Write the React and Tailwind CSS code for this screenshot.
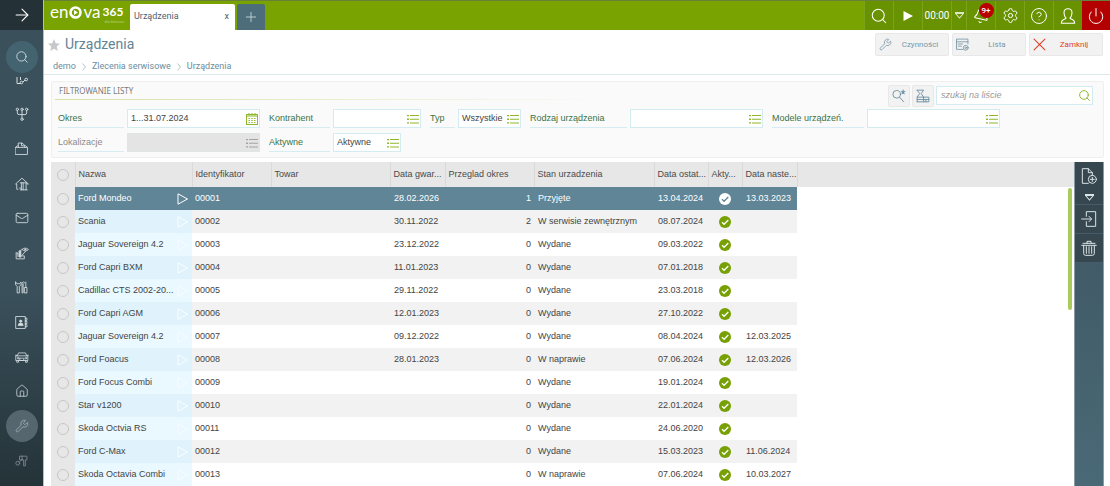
import React from 'react';
import { ArrowRight, Search, Settings, Power, Plus, Mail, House, Wrench, CircleQuestionMark, Bell } from 'lucide-react';

const rows = [
  { name: 'Ford Mondeo', id: '00001', warranty: '28.02.2026', period: 1, state: 'Przyjęte', last: '13.04.2024', next: '13.03.2023' },
  { name: 'Scania', id: '00002', warranty: '30.11.2022', period: 2, state: 'W serwisie zewnętrznym', last: '08.07.2024', next: '' },
  { name: 'Jaguar Sovereign 4.2', id: '00003', warranty: '23.12.2022', period: 0, state: 'Wydane', last: '09.03.2022', next: '' },
  { name: 'Ford Capri BXM', id: '00004', warranty: '11.01.2023', period: 0, state: 'Wydane', last: '07.01.2018', next: '' },
  { name: 'Cadillac CTS 2002-20...', id: '00005', warranty: '29.11.2022', period: 0, state: 'Wydane', last: '23.03.2018', next: '' },
  { name: 'Ford Capri AGM', id: '00006', warranty: '12.01.2023', period: 0, state: 'Wydane', last: '27.10.2022', next: '' },
  { name: 'Jaguar Sovereign 4.2', id: '00007', warranty: '09.12.2022', period: 0, state: 'Wydane', last: '08.04.2024', next: '12.03.2025' },
  { name: 'Ford Foacus', id: '00008', warranty: '28.01.2023', period: 0, state: 'W naprawie', last: '07.06.2024', next: '12.03.2026' },
  { name: 'Ford Focus Combi', id: '00009', warranty: '', period: 0, state: 'Wydane', last: '19.01.2024', next: '' },
  { name: 'Star v1200', id: '00010', warranty: '', period: 0, state: 'Wydane', last: '22.01.2024', next: '' },
  { name: 'Skoda Octvia RS', id: '00011', warranty: '', period: 0, state: 'Wydane', last: '24.06.2020', next: '' },
  { name: 'Ford C-Max', id: '00012', warranty: '', period: 0, state: 'Wydane', last: '15.03.2023', next: '11.06.2024' },
  { name: 'Skoda Octavia Combi', id: '00013', warranty: '', period: 0, state: 'W naprawie', last: '07.06.2024', next: '10.03.2027' },
];

const columns = [
  { label: 'Nazwa', width: 'w-[117px]' },
  { label: 'Identyfikator', width: 'w-[79px]' },
  { label: 'Towar', width: 'w-[119px]' },
  { label: 'Data gwar...', width: 'w-[55px]' },
  { label: 'Przeglad okres', width: 'w-[89px]' },
  { label: 'Stan urzadzenia', width: 'w-[120px]' },
  { label: 'Data ostat...', width: 'w-[54px]' },
  { label: 'Akty...', width: 'w-[34px]' },
  { label: 'Data naste...', width: 'w-[55px]' },
];

const Svg = ({ size = 12, box = 24, sw = 1.6, children, className = '' }) => (
  <svg width={size} height={size} viewBox={`0 0 ${box} ${box}`} fill="none" stroke="currentColor" strokeWidth={sw} strokeLinecap="round" strokeLinejoin="round" className={className} aria-hidden="true">
    {children}
  </svg>
);

const ListIcon = () => (
  <svg width="13" height="9" viewBox="0 0 13 9" fill="currentColor" aria-hidden="true">
    <path d="M0 0h2v1.3H0zM3 0h9v1.1H3zM0 3.6h2v1.3H0zM3 3.7h9v1.1H3zM0 7.3h2v1.3H0zM3 7.4h9v1.1H3z" />
  </svg>
);

const CalendarIcon = () => (
  <svg width="12" height="12" viewBox="0 0 12 12" fill="none" stroke="currentColor" aria-hidden="true">
    <rect x="0.5" y="1.5" width="11" height="10" />
    <path d="M0.5 3h11M3 0v2.5M6 0v2.5M9 0v2.5" />
    <path d="M2.5 5.5h7M2.5 7.5h7M2.5 9.5h7" strokeWidth="1.2" strokeDasharray="1.4 1.4" />
  </svg>
);

const DropTriangle = () => (
  <svg width="9" height="7" viewBox="0 0 9 7" fill="none" stroke="currentColor" aria-hidden="true">
    <path d="M0 1h9" strokeWidth="2" />
    <path d="M1 2 4.500 6 8 2" strokeWidth="1.1" />
  </svg>
);

const PlayOutline = ({ className }) => (
  <svg width="12" height="12" viewBox="0 0 12 12" fill="none" stroke="currentColor" className={className} aria-hidden="true">
    <path d="M1 0.8 10.5 6 1 11.2z" />
  </svg>
);

const CheckBadge = ({ selected }) => (
  <svg width="12" height="12" viewBox="0 0 12 12" className={`mx-auto ${selected ? 'text-white' : 'text-[#76a003]'}`} aria-label="tak">
    <circle cx="6" cy="6" r="6" fill="currentColor" />
    <path d="M3 6.2 5.1 8.3 9.3 4" fill="none" stroke={selected ? '#5f8597' : '#fff'} strokeWidth="1.3" />
  </svg>
);

const WrenchIcon = ({ size = 13, sw = 1.5 }) => <Wrench size={size} strokeWidth={sw} />;

const sideItems = [
  {
    label: 'Rozgałęzienia',
    icon: (
      <Svg size={14}>
        <circle cx="4" cy="4" r="2" /><circle cx="12" cy="4" r="2" /><circle cx="20" cy="4" r="2" /><circle cx="12" cy="21" r="2" />
        <path d="M4 6v4q0 3 3 3h10q3 0 3-3V6M12 6v13" />
      </Svg>
    ),
  },
  {
    label: 'Dokumenty',
    icon: <Svg size={13}><path d="M1 10h22v13H1zM1 10l3-3h2M20 7l3 3M6 10V2h7l5 4v4M12 2v5h6" /></Svg>,
  },
  {
    label: 'Bank',
    icon: <Svg size={14} sw={1.5}><path d="M5 21H3v-9H1L12 2l11 10h-2M9 10h11M9 22h12M11 10v12M14 10v12M19 10v12M8 19h2" /></Svg>,
  },
  { label: 'Poczta', icon: <Mail size={14} strokeWidth={1.5} /> },
  {
    label: 'Produkcja',
    icon: (
      <Svg size={14} sw={1.5}>
        <path d="M2 12v10h14v-5H8M2 12h3v6M12 16l6-7" />
        <path d="M7 9v10h3V8z" fill="currentColor" />
        <path d="M12 6q5-5 11 0-5 5-11 0z" />
        <circle cx="17.500" cy="6" r="1" />
      </Svg>
    ),
  },
  {
    label: 'Narzędzia',
    icon: <Svg size={13}><path d="M1 2v5l3 3v12h4V10l3-3V2L8 5H4zM13 3q3-3 5 0M15 5v17h-2V5M20 2v9M18 12h4v10h-4z" /></Svg>,
  },
  {
    label: 'Kontakty',
    icon: (
      <Svg size={13}>
        <path d="M2 1h17v22H2zM19 4h3v4h-3M19 10h3v4h-3M19 16h3v4h-3" />
        <circle cx="10.500" cy="9.500" r="2" fill="currentColor" />
        <path d="M6 17q0-4 4.500-4t4.500 4z" fill="currentColor" />
      </Svg>
    ),
  },
  {
    label: 'Flota',
    icon: <Svg size={14} sw={1.4}><path d="M4 10 6 5h12l2 5M2 10h20v8H2zM1 9h2M21 9h2M3 18v3h3v-3M18 18v3h3v-3M9 14h6v4H9z" /><circle cx="5.500" cy="14" r="1.500" /><circle cx="18.500" cy="14" r="1.500" /></Svg>,
  },
  { label: 'Dom', icon: <House size={14} strokeWidth={1.3} /> },
  { label: 'Serwis', icon: <WrenchIcon size={14} sw={1.3} />, active: true },
  {
    label: 'Klucze',
    icon: <Svg size={13} className="opacity-50"><path d="M9 4h13v7h-3v11h-3V11H9zM13 4v7M9 14l4-4" /><circle cx="5" cy="17" r="3.500" /></Svg>,
  },
];

const Sidebar = () => (
  <aside className="w-11 shrink-0 flex flex-col border-r border-[#b4c0c6] bg-gradient-to-b from-[#3a505b] from-60% to-[#243338] text-[#d5dde1]">
    <button aria-label="Rozwiń menu" className="h-[30px] shrink-0 flex items-center justify-center bg-[#243137] text-white">
      <ArrowRight size={20} strokeWidth={1.3} />
    </button>
    <button aria-label="Szukaj" className="mt-[11px] w-8 h-8 shrink-0 self-center rounded-full bg-[#446370] flex items-center justify-center">
      <Search size={14} strokeWidth={1.5} />
    </button>
    <nav className="flex-1 min-h-0 flex flex-col pb-2 overflow-hidden">
      <div className="h-6 shrink-0 flex justify-center pt-1">
        <svg width="12" height="8" viewBox="0 0 12 8" fill="none" stroke="currentColor" aria-hidden="true">
          <path d="M1 0v6.500h4M7 5l2-2M4.500 3V0" />
          <circle cx="5.500" cy="5.500" r="1.300" /><circle cx="10.200" cy="2.500" r="1.300" />
        </svg>
      </div>
      {sideItems.map((item) => (
        <a key={item.label} href="#" aria-label={item.label} className="flex-1 flex items-center justify-center">
          <span className={item.active ? 'w-8 h-8 rounded-full bg-[#55666e] flex items-center justify-center text-[#aeb9be]' : ''}>
            {item.icon}
          </span>
        </a>
      ))}
    </nav>
  </aside>
);

const TopButton = ({ label, className = 'w-[29px]', children }) => (
  <button aria-label={label} className={`h-full flex items-center justify-center border-l border-[#7ba41c] bg-[#689200] ${className}`}>
    {children}
  </button>
);

const Header = () => (
  <header className="h-[30px] shrink-0 flex bg-[#79a300] border-t border-[#68803a] text-white">
    <a href="#" className="w-[86px] shrink-0 pl-1.5 pt-[3px] flex flex-col font-['Lato',sans-serif]">
      <span className="flex items-center h-4 text-[17px] leading-4">
        <span>en</span>
        <svg width="13" height="13" viewBox="0 0 13 13" className="mx-px" aria-hidden="true">
          <circle cx="6.500" cy="6.500" r="5" fill="none" stroke="#fff" strokeWidth="2.600" />
          <path d="M5 4v5l4-2.500z" fill="#fff" />
        </svg>
        <span>va</span>
        <span className="ml-0.5 text-[12px] font-bold">365</span>
      </span>
      <span className="pr-1.5 text-right text-[4px] leading-none text-[#bcd27c]">dla biznesu</span>
    </a>
    <div className="w-[105px] mt-[3px] px-1 flex items-center justify-between rounded-t-xs bg-white text-[9px] text-[#51626c]">
      <span>Urządzenia</span>
      <button aria-label="Zamknij kartę" className="pr-0.5">x</button>
    </div>
    <button aria-label="Nowa karta" className="w-7 ml-0.5 mt-[3px] rounded-t-xs bg-[#4d6d7a] text-[#c9d6dc] flex items-center justify-center">
      <Plus size={16} strokeWidth={1.3} />
    </button>
    <div className="ml-auto flex">
      <TopButton label="Szukaj"><Search size={18} strokeWidth={1.4} /></TopButton>
      <TopButton label="Start">
        <svg width="10" height="10" viewBox="0 0 10 10" aria-hidden="true"><path d="M0.500 0 10 5 0.500 10z" fill="#fff" /></svg>
      </TopButton>
      <TopButton label="Czas pracy"><span className="text-[10px]">00:00</span></TopButton>
      <TopButton label="Więcej" className="w-[15px] text-[#dce8bd]"><DropTriangle /></TopButton>
      <TopButton label="Powiadomienia">
        <span className="relative">
          <Bell size={17} strokeWidth={1.4} className="rotate-12" />
          <span className="absolute -top-1 left-1.5 w-[15px] h-[15px] rounded-full bg-[#b80000] text-[8px] leading-[15px] text-center font-medium">9+</span>
        </span>
      </TopButton>
      <TopButton label="Ustawienia"><Settings size={17} strokeWidth={1.4} /></TopButton>
      <TopButton label="Pomoc"><CircleQuestionMark size={18} strokeWidth={1.3} /></TopButton>
      <TopButton label="Użytkownik">
        <Svg size={16} sw={1.6}><path d="M9 15C6 12 6 9 6 7c0-8 12-8 12 0 0 2 0 5-3 8 1 3 7 1 7 8H2c0-7 6-5 7-8z" /></Svg>
      </TopButton>
      <button aria-label="Wyloguj" className="w-7 h-full flex items-center justify-center bg-[#b30000]">
        <Power size={18} strokeWidth={1.3} />
      </button>
    </div>
  </header>
);

const ActionButton = ({ icon, label, danger }) => (
  <button className={`w-[74px] h-[23px] pl-[3px] flex items-center rounded-xs border border-[#e8e8e8] bg-[#f2f2f2] text-[8px] ${danger ? 'text-[#e0402f]' : 'text-[#7a97a5]'}`}>
    {icon}
    <span className="flex-1 text-center">{label}</span>
  </button>
);

const Crumb = () => (
  <svg width="4" height="8" viewBox="0 0 4 8" fill="none" stroke="#b5c3ca" aria-hidden="true"><path d="M0.500 0.500 3.500 4 0.500 7.500" /></svg>
);

const PageTitle = () => (
  <div className="shrink-0 flex justify-between border-b border-[#dce7ea]">
    <div className="pl-1">
      <h1 className="h-[29px] flex items-center gap-[5px] text-[14px] text-[#5f8597]">
        <svg width="12" height="12" viewBox="0 0 24 24" fill="#c6c9cb" aria-hidden="true">
          <path d="M12 0l3.500 8.500 8.500.7-6.500 5.900 2 8.900L12 19.300 4.500 24l2-8.900L0 9.200l8.500-.7z" />
        </svg>
        Urządzenia
      </h1>
      <nav aria-label="Ścieżka" className="h-[15px] pl-[5px] flex items-center gap-1.5 text-[9px] text-[#6c8d9d]">
        <a href="#">demo</a>
        <Crumb />
        <a href="#">Zlecenia serwisowe</a>
        <Crumb />
        <a href="#">Urządzenia</a>
      </nav>
    </div>
    <div className="flex gap-[3px] pt-[3px] pr-[7px]">
      <ActionButton icon={<WrenchIcon />} label="Czynności" />
      <ActionButton
        label="Lista"
        icon={<Svg size={13}><path d="M13 21H1V2h21v9M1 7h21M4 11h8M4 15h6" /><circle cx="18" cy="18" r="4.500" /><circle cx="18" cy="18" r="1.500" /></Svg>}
      />
      <ActionButton icon={<Svg size={13} sw={2}><path d="M2 2l20 20M22 2 2 22" /></Svg>} label="Zamknij" danger />
    </div>
  </div>
);

const Field = ({ id, label, labelWidth, width, value = '', disabled, calendar }) => (
  <div className="flex gap-[3px]">
    <label htmlFor={id} className={`${labelWidth} h-[19px] leading-[18px] border-b border-[#d5edf2] ${disabled ? 'text-[#8b8b8b]' : 'text-[#3b7446]'}`}>
      {label}
    </label>
    <div className={`${width} h-[19px] pl-[3px] flex items-center border ${disabled ? 'bg-[#e4e4e4] border-[#dfe4e6]' : 'bg-white border-[#d3ecf2]'}`}>
      <input id={id} defaultValue={value} disabled={disabled} className="min-w-0 flex-1 outline-none text-[#444]" />
      <button aria-label={`Wybierz: ${label}`} disabled={disabled} className={`shrink-0 ${disabled ? 'text-[#a3a3a3]' : 'text-[#8fb82c]'} ${calendar ? 'pr-px' : 'pt-0.5'}`}>
        {calendar ? <CalendarIcon /> : <ListIcon />}
      </button>
    </div>
  </div>
);

const IconButton = ({ label, children }) => (
  <button aria-label={label} className="w-[22px] h-[22px] flex items-center justify-center rounded-xs border border-[#e8e8e8] bg-[#f2f2f2] text-[#6d91a3]">
    {children}
  </button>
);

const Filters = () => (
  <section className="shrink-0 mt-1.5 ml-[7px] mr-1.5 h-[77px] border border-[#efefef] rounded-xs bg-[#fafafa] font-['Liberation_Sans',Arial,sans-serif] text-[9px]">
    <div className="flex h-[27px] pr-2.5">
      <div className="flex-1 pl-[3px]">
        <h2 className="h-[17px] pl-1 flex items-center font-['Noto_Sans',sans-serif] text-[8px] text-[#7b7b7b]">FILTROWANIE LISTY</h2>
        <div className="w-2/3 h-px bg-gradient-to-r from-[#d5e2a4] to-transparent" />
      </div>
      <div className="flex gap-0.5 pt-[3px]">
        <IconButton label="Zapisane wyszukiwania">
          <Svg size={14}><circle cx="8" cy="9" r="6.500" /><path d="M13 14l7 8" /><path d="M19 1l1 3h3l-2.500 2 1 3L19 7.500 16.500 9l1-3L15 4h3z" fill="currentColor" strokeWidth="0.500" /></Svg>
        </IconButton>
        <IconButton label="Filtry">
          <Svg size={14}><path d="M2 2h11l-4 6 4 6H2l4-6zM2 22V14M2 22h20v-8h-9M2 18h20M13 14v8M17 18v4" /></Svg>
        </IconButton>
        <div className="w-[157px] h-[19px] mt-px pl-1 pr-px flex items-center border border-[#d3ecf2] bg-white">
          <input aria-label="szukaj na liście" placeholder="szukaj na liście" className="min-w-0 flex-1 outline-none italic placeholder:text-[#9a9a9a]" />
          <button aria-label="Szukaj" className="text-[#8fb82c]"><Search size={13} strokeWidth={1.8} /></button>
        </div>
      </div>
    </div>
    <div className="pl-1.5 flex flex-col gap-[5px]">
      <div className="flex gap-[9px]">
        <Field id="okres" label="Okres" labelWidth="w-[66px]" width="w-[133px]" value="1...31.07.2024" calendar />
        <Field id="kontrahent" label="Kontrahent" labelWidth="w-[61px]" width="w-[88px]" />
        <Field id="typ" label="Typ" labelWidth="w-[25px]" width="w-[63px]" value="Wszystkie" />
        <Field id="rodzaj" label="Rodzaj urządzenia" labelWidth="w-[97px]" width="w-[133px]" />
        <Field id="modele" label="Modele urządzeń." labelWidth="w-[92px]" width="w-[133px]" />
      </div>
      <div className="flex gap-[9px]">
        <Field id="lokalizacje" label="Lokalizacje" labelWidth="w-[66px]" width="w-[133px]" disabled />
        <Field id="aktywne" label="Aktywne" labelWidth="w-[61px]" width="w-[68px]" value="Aktywne" />
      </div>
    </div>
  </section>
);

const SelectBox = ({ label }) => (
  <input type="checkbox" aria-label={label} className="appearance-none block mx-auto w-3 h-3 rounded-full border border-[#c6c6c6]" />
);

const DeviceRow = ({ row, index }) => {
  const selected = index === 0;
  const striped = index % 2 === 1;

  return (
    <tr className={`h-[23px] ${selected ? 'text-white' : 'text-[#444]'}`}>
      <td className="bg-[#e7e7e7]"><SelectBox label={`Zaznacz ${row.name}`} /></td>
      <td className={`pl-[3px] pr-[3px] ${selected ? 'bg-[#5f8597]' : striped ? 'bg-[#e0f3fc]' : 'bg-[#eaf8ff]'}`}>
        <span className="flex items-center justify-between">
          {row.name}
          <PlayOutline className={selected ? 'text-white' : 'text-[#f8fdff]'} />
        </span>
      </td>
      {[
        [row.id, 'pl-[3px]'],
        ['', ''],
        [row.warranty, 'pl-1'],
        [row.period, 'pr-[3px] text-right'],
        [row.state, 'pl-1'],
        [row.last, 'pl-1'],
        [<CheckBadge key="check" selected={selected} />, ''],
        [row.next, 'pl-1'],
      ].map(([value, pad], i) => (
        <td key={i} className={`${pad} ${selected ? 'bg-[#5f8597]' : striped ? 'bg-[#f2f2f2]' : 'bg-white'}`}>{value}</td>
      ))}
      <td />
    </tr>
  );
};

const DeviceTable = () => (
  <div className="flex-1 min-w-0 overflow-hidden">
    <table className="w-full table-fixed border-collapse whitespace-nowrap font-['Liberation_Sans',Arial,sans-serif] text-[9px]">
      <thead>
        <tr className="h-[25px] bg-[#e7e7e7] text-[#4a4a4a] text-left">
          <th className="w-6 border-r border-[#dadada]"><SelectBox label="Zaznacz wszystkie" /></th>
          {columns.map((col) => (
            <th key={col.label} className={`${col.width} pl-[3px] font-normal border-r border-[#dadada]`}>{col.label}</th>
          ))}
          <th />
        </tr>
      </thead>
      <tbody>
        {rows.map((row, i) => <DeviceRow key={row.id} row={row} index={i} />)}
      </tbody>
    </table>
  </div>
);

const Toolbar = () => (
  <div className="w-[30px] shrink-0 bg-gradient-to-b from-[#3d5561] to-[#4a6976] text-[#dbe3e6] border-x border-[#8a9aa2]">
    <div className="bg-[#36474f]">
      <button aria-label="Nowy" className="w-full h-7 flex items-center justify-center">
        <Svg size={16} sw={1.5}><path d="M11 23H2V1h9l6 6v4M11 1v6h6" /><circle cx="17" cy="17" r="6" /><path d="M17 14v6M14 17h6" /></Svg>
      </button>
      <button aria-label="Więcej opcji" className="w-full h-[15px] flex items-center justify-center border-b border-[#465d69]"><DropTriangle /></button>
      <button aria-label="Otwórz" className="w-full h-[29px] flex items-center justify-center border-b border-[#465d69]">
        <Svg size={16} sw={1.5}><path d="M8 8V1h14v22H8v-7M1 12h14M12 8l4 4-4 4" /></Svg>
      </button>
      <button aria-label="Usuń" className="w-full h-[29px] flex items-center justify-center border-b border-[#465d69]">
        <Svg size={16} sw={1.5}><path d="M1 8h22M3 5h18M9 5V2h6v3M4 8v12q0 3 3 3h10q3 0 3-3V8M8 10v10M12 10v10M16 10v10" /></Svg>
      </button>
    </div>
  </div>
);

const App = () => (
  <div className="h-screen flex overflow-hidden bg-white font-['Roboto',sans-serif]">
    <Sidebar />
    <main className="flex-1 min-w-0 flex flex-col">
      <Header />
      <PageTitle />
      <Filters />
      <div className="flex-1 min-h-0 mt-1 ml-[7px] mr-1.5 flex">
        <div className="relative flex-1 min-w-0 flex">
          <DeviceTable />
          <span className="absolute top-[26px] right-0.5 w-1 h-[122px] rounded-full bg-[#a9cb5e]" />
        </div>
        <Toolbar />
      </div>
    </main>
  </div>
);

export default App;
